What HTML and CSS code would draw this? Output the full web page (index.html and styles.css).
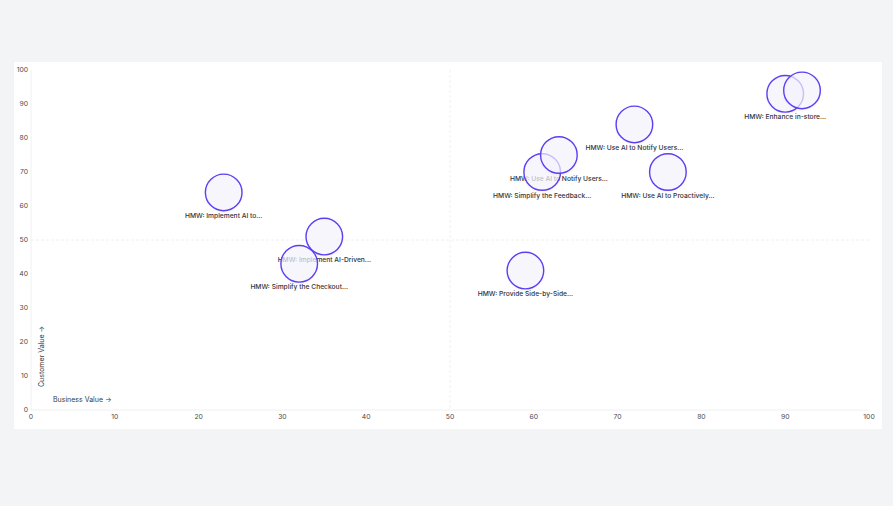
FILE: index.html
```html
<!DOCTYPE html>
<html lang="en">
<head>
<meta charset="utf-8">
<title>Value Matrix</title>
<link rel="stylesheet" href="styles.css">
</head>
<body>
<div class="page">
  <section class="card">
    <svg class="chart" width="868" height="367" viewBox="0 0 868 367" xmlns="http://www.w3.org/2000/svg">
      <!-- axes -->
      <line class="axis" x1="17" y1="8" x2="17" y2="348"/>
      <line class="axis" x1="17" y1="348" x2="855" y2="348"/>
      <!-- quadrant reference lines -->
      <line class="ref" x1="436" y1="8" x2="436" y2="348"/>
      <line class="ref" x1="17" y1="178" x2="855" y2="178"/>

      <!-- y ticks -->
      <g class="tick tick-y">
        <text x="14" y="350.4">0</text>
        <text x="14" y="316.4">10</text>
        <text x="14" y="282.4">20</text>
        <text x="14" y="248.4">30</text>
        <text x="14" y="214.4">40</text>
        <text x="14" y="180.4">50</text>
        <text x="14" y="146.4">60</text>
        <text x="14" y="112.4">70</text>
        <text x="14" y="78.4">80</text>
        <text x="14" y="44.4">90</text>
        <text x="14" y="10.4">100</text>
      </g>
      <!-- x ticks -->
      <g class="tick tick-x">
        <text x="17" y="356.5">0</text>
        <text x="100.8" y="356.5">10</text>
        <text x="184.6" y="356.5">20</text>
        <text x="268.4" y="356.5">30</text>
        <text x="352.2" y="356.5">40</text>
        <text x="436" y="356.5">50</text>
        <text x="519.8" y="356.5">60</text>
        <text x="603.6" y="356.5">70</text>
        <text x="687.4" y="356.5">80</text>
        <text x="771.2" y="356.5">90</text>
        <text x="855" y="356.5">100</text>
      </g>

      <!-- axis titles -->
      <text class="axis-title" x="39" y="340">Business Value →</text>
      <text class="axis-title" transform="translate(30 325) rotate(-90)">Customer Value →</text>

      <!-- labels layer (beneath bubbles) -->
      <g class="labels">
        <text x="209.7" y="155.9">HMW: Implement AI to...</text>
        <text x="310.3" y="200.1">HMW: Implement AI-Driven...</text>
        <text x="285.2" y="227.3">HMW: Simplify the Checkout...</text>
        <text x="511.4" y="234.1">HMW: Provide Side-by-Side...</text>
        <text x="528.2" y="135.5">HMW: Simplify the Feedback...</text>
        <text x="544.9" y="118.5">HMW: Use AI to Notify Users...</text>
        <text x="620.4" y="87.9">HMW: Use AI to Notify Users...</text>
        <text x="653.9" y="135.5">HMW: Use AI to Proactively...</text>
        <text x="771.2" y="57.3">HMW: Enhance in-store...</text>
      </g>

      <!-- bubbles -->
      <g class="bubbles">
        <circle cx="209.7" cy="130.4" r="18.3"/>
        <circle cx="310.3" cy="174.6" r="18.3"/>
        <circle cx="285.2" cy="201.8" r="18.3"/>
        <circle cx="511.4" cy="208.6" r="18.3"/>
        <circle cx="528.2" cy="110" r="18.3"/>
        <circle cx="544.9" cy="93" r="18.3"/>
        <circle cx="620.4" cy="62.4" r="18.3"/>
        <circle cx="653.9" cy="110" r="18.3"/>
        <circle cx="771.2" cy="31.8" r="18.3"/>
        <circle cx="788" cy="28.4" r="18.3"/>
      </g>
    </svg>
  </section>
</div>
</body>
</html>
```

FILE: styles.css
```css
html, body {
  margin: 0;
  padding: 0;
  background: #f3f4f6;
  font-family: Inter, "Noto Sans", "Liberation Sans", sans-serif;
}

.page {
  padding: 62px 11px 0 14px;
}

.card {
  background: #ffffff;
  height: 367px;
}

.chart {
  display: block;
  overflow: visible;
}

.axis {
  stroke: #f0f0f2;
  stroke-width: 1;
}

.ref {
  stroke: #f0f0f2;
  stroke-width: 1;
  stroke-dasharray: 3 2;
}

.tick text {
  font-size: 6.8px;
  fill: #4b4b4f;
}

.tick-y text {
  text-anchor: end;
}

.tick-x text {
  text-anchor: middle;
}

.axis-title {
  font-size: 7px;
  fill: #3a3a3e;
}

.labels text {
  font-size: 6.7px;
  font-weight: 500;
  fill: #333338;
  text-anchor: middle;
}

.bubbles circle {
  fill: rgba(248, 247, 255, 0.7);
  stroke: #5b3ff1;
  stroke-width: 1.4;
  filter: drop-shadow(0 1px 1px rgba(60, 40, 160, 0.06));
}
```
